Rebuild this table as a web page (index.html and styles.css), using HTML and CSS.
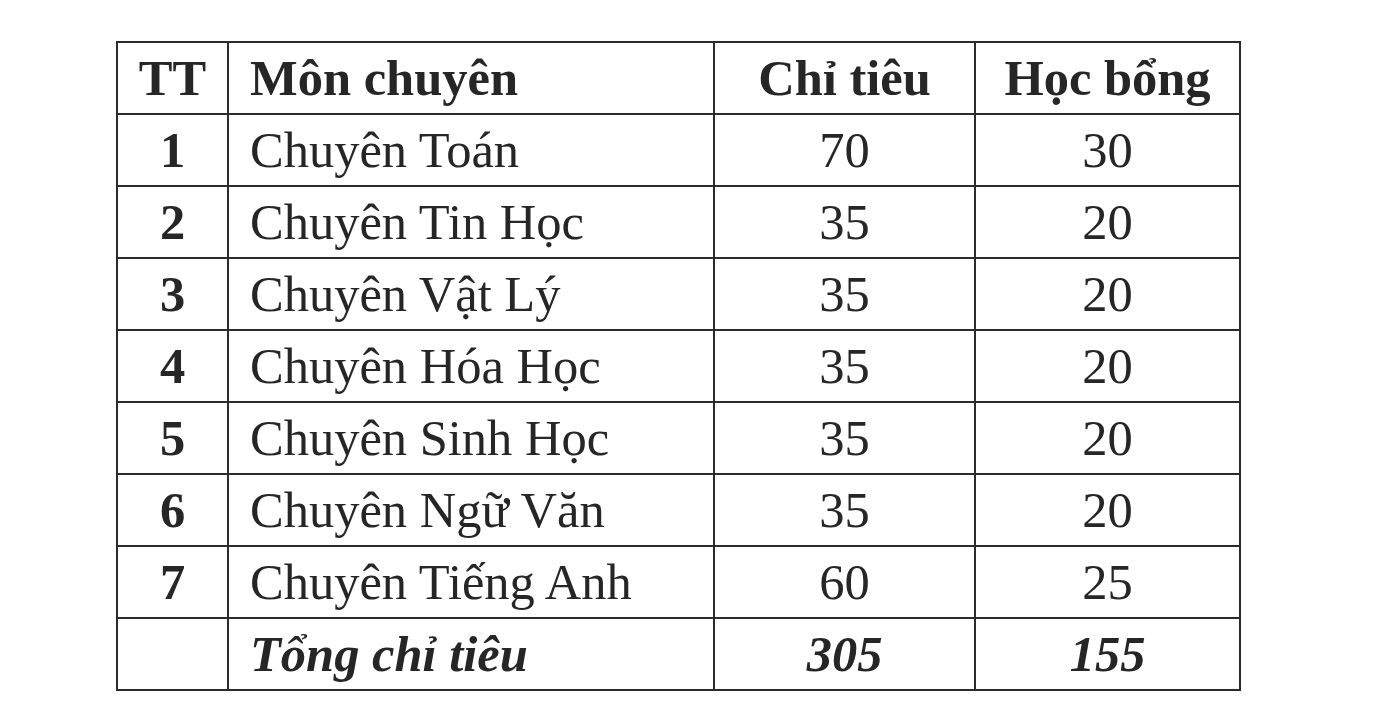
FILE: index.html
```html
<!DOCTYPE html>
<html lang="vi">
<head>
<meta charset="utf-8">
<title>Chỉ tiêu tuyển sinh</title>
<link rel="stylesheet" href="styles.css">
</head>
<body>
<div class="page">
  <table class="quota">
    <colgroup>
      <col class="c-tt">
      <col class="c-mon">
      <col class="c-ct">
      <col class="c-hb">
    </colgroup>
    <thead>
      <tr>
        <th class="center">TT</th>
        <th class="left">Môn chuyên</th>
        <th class="center">Chỉ tiêu</th>
        <th class="center">Học bổng</th>
      </tr>
    </thead>
    <tbody>
      <tr><td class="center bold">1</td><td class="left">Chuyên Toán</td><td class="center">70</td><td class="center">30</td></tr>
      <tr><td class="center bold">2</td><td class="left">Chuyên Tin Học</td><td class="center">35</td><td class="center">20</td></tr>
      <tr><td class="center bold">3</td><td class="left">Chuyên Vật Lý</td><td class="center">35</td><td class="center">20</td></tr>
      <tr><td class="center bold">4</td><td class="left">Chuyên Hóa Học</td><td class="center">35</td><td class="center">20</td></tr>
      <tr><td class="center bold">5</td><td class="left">Chuyên Sinh Học</td><td class="center">35</td><td class="center">20</td></tr>
      <tr><td class="center bold">6</td><td class="left">Chuyên Ngữ Văn</td><td class="center">35</td><td class="center">20</td></tr>
      <tr><td class="center bold">7</td><td class="left">Chuyên Tiếng Anh</td><td class="center">60</td><td class="center">25</td></tr>
      <tr class="total"><td class="center"></td><td class="left">Tổng chỉ tiêu</td><td class="center">305</td><td class="center">155</td></tr>
    </tbody>
  </table>
</div>
</body>
</html>
```
FILE: styles.css
```css
html, body {
  margin: 0;
  padding: 0;
  background: #ffffff;
}
.page {
  width: 1390px;
  height: 727px;
  padding: 41px 0 0 116px;
  box-sizing: border-box;
  font-family: "Liberation Serif", "Times New Roman", serif;
  color: #262626;
}
.quota {
  border-collapse: collapse;
  table-layout: fixed;
  width: 1123px;
}
.c-tt { width: 111px; }
.c-mon { width: 486px; }
.c-ct { width: 261px; }
.c-hb { width: 265px; }
.quota th,
.quota td {
  border: 2px solid #2b2b2b;
  height: 72px;
  padding: 0;
  font-size: 50.5px;
  line-height: 1;
  vertical-align: middle;
  box-sizing: border-box;
}
.quota th {
  font-weight: bold;
}
.quota td {
  font-weight: normal;
}
.center { text-align: center; }
.left { text-align: left; padding-left: 21px !important; }
.quota td.bold { font-weight: bold; }
.total td {
  font-weight: bold;
  font-style: italic;
}
```
